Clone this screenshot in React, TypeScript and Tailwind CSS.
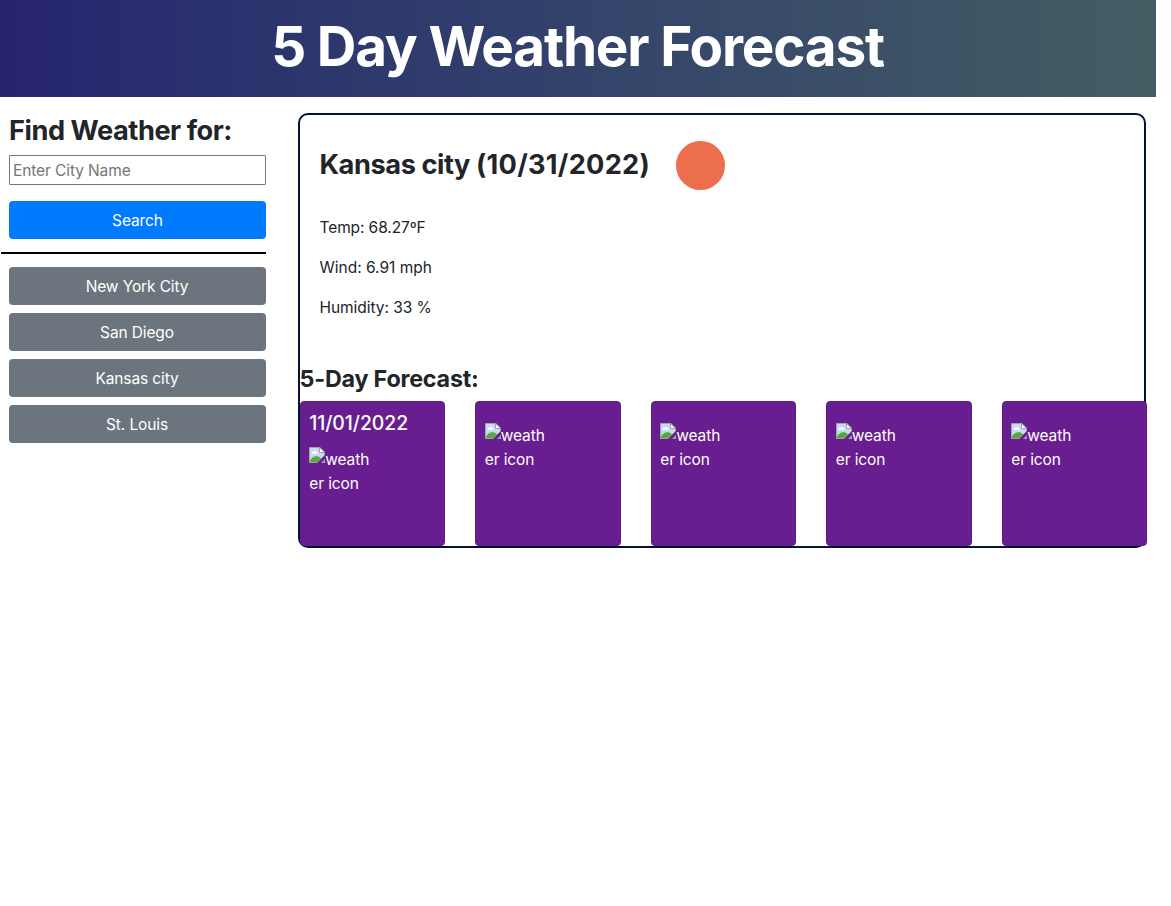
const cities = ["New York City", "San Diego", "Kansas city", "St. Louis"];
const days = ["11/01/2022", "", "", "", ""];

function BrokenImage() {
  return (
    <svg width="16" height="16" viewBox="0 0 16 16" className="-mt-px block shrink-0">
      <path d="M0.5 0.5H11L15.5 5V8.5L8.5 15.5H0.5Z" fill="#c6d9f5" stroke="#a3a3a3" />
      <path d="M2.5 6.2C2.5 4.8 4 4.4 4.5 5C4.8 3.3 7.2 3.4 7.3 5C8.6 4.8 9 6.2 8.4 6.8H3C2.7 6.8 2.5 6.5 2.5 6.2Z" fill="#fff" />
      <path d="M1 15V13.5C3 10.5 5 9.5 7 9.3C9 9.2 10.5 9.8 12 11.4L8.3 15Z" fill="#57a839" />
      <path d="M10.5 0.5V5.5H15.5Z" fill="#fff" stroke="#a3a3a3" />
      <path d="M16 8V12L12 16H8Z" fill="#681e90" />
      <path d="M16 12V16H12Z" fill="#a3a3a3" />
    </svg>
  );
}

function DayCard({ date }: { date: string }) {
  return (
    <div className="flex h-[145px] w-[145.5px] shrink-0 flex-col rounded-[4px] border border-[#5e1b82] bg-[#681e90] px-[8.6px] text-white">
      <h5 className="mt-[9px] mb-2 h-6 text-[19.4px] leading-6 font-medium tracking-[-0.05px] empty:h-0">{date}</h5>
      <div className="mt-[5px] w-[66px] text-[15.5px] leading-6 tracking-[-0.1px]">
        <div className="flex h-6">
          <BrokenImage />
          <span>weath</span>
        </div>
        <div>er icon</div>
      </div>
    </div>
  );
}

export default function App() {
  return (
    <div className="min-h-[906px] w-[1156px] bg-white font-['Inter',sans-serif] text-[15.5px] leading-6 text-[#212529]">
      <header className="flex h-[97px] justify-center bg-linear-to-r from-[#27246f] to-[#445d63] pt-[13px]">
        <h1 className="-ml-px text-[54.8px] leading-[67px] font-bold tracking-[-1.2px] whitespace-nowrap text-white">5 Day Weather Forecast</h1>
      </header>
      <main className="flex">
        <aside className="w-[266px] shrink-0 pt-4">
          <div className="pl-[9px]">
            <h3 className="h-[34px] pt-px text-[27.2px] leading-[34px] font-bold tracking-[-0.45px] whitespace-nowrap">Find Weather for:</h3>
            <input
              placeholder="Enter City Name"
              className="mt-2 block h-[30px] w-full rounded-[1px] border border-[#767676] px-[3px] tracking-[-0.1px] outline-none placeholder:text-[#757575]"
            />
            <button className="mt-4 block h-[38px] w-full rounded-[4px] bg-[#007bff] pt-0.5 tracking-[-0.1px] text-white">Search</button>
          </div>
          <div className="mt-[13px] ml-px h-[2px] bg-black" />
          <div className="mt-[13px] flex flex-col gap-2 pl-[9px]">
            {cities.map((c) => (
              <button key={c} className="h-[38px] w-full rounded-[4px] bg-[#6c757d] pt-0.5 pr-px tracking-[-0.12px] text-white">
                {c}
              </button>
            ))}
          </div>
        </aside>
        <section className="mt-4 ml-8 h-[435px] w-[848px] shrink-0 rounded-[10px] border-2 border-[#041235]">
          <div className="h-[247px] pt-[26px] pl-[19.5px]">
            <div className="flex h-[49px] items-center">
              <h3 className="w-[356.5px] pb-0.5 text-[27.2px] leading-[34px] font-bold tracking-[0.28px] whitespace-nowrap">
                <span className="tracking-[-0.43px]">Kansas city </span>(10/31/2022)
              </h3>
              <svg width="49" height="49" viewBox="0 0 49 49">
                <circle cx="24.5" cy="24.5" r="24.5" fill="#ec6e4c" />
              </svg>
            </div>
            <p className="mt-[26px] tracking-[-0.1px]">Temp: 68.27ºF</p>
            <p className="mt-4">Wind: 6.91 mph</p>
            <p className="mt-4 tracking-[-0.05px]">Humidity: 33 %</p>
          </div>
          <h4 className="-ml-[0.5px] h-[39px] pt-[2px] text-[23.3px] leading-[29px] font-bold tracking-[-0.2px] whitespace-nowrap">5-Day Forecast:</h4>
          <div className="-ml-[0.4px] flex gap-[30px]">
            {days.map((d, i) => (
              <DayCard key={i} date={d} />
            ))}
          </div>
        </section>
      </main>
    </div>
  );
}
